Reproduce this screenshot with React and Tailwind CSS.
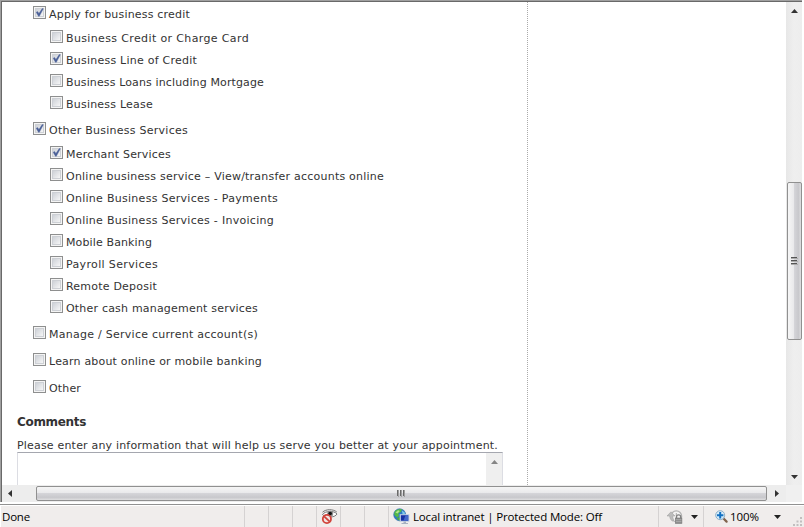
import React from 'react';

const items = [
  { text: 'Apply for business credit', checked: true, row: 'h-[24px]', width: 141 },
  { text: 'Business Credit or Charge Card', sub: true, row: 'h-[22px]', width: 183 },
  { text: 'Business Line of Credit', sub: true, checked: true, row: 'h-[22px]', width: 131 },
  { text: 'Business Loans including Mortgage', sub: true, row: 'h-[22px]', width: 198 },
  { text: 'Business Lease', sub: true, row: 'h-[26px]', width: 87 },
  { text: 'Other Business Services', checked: true, row: 'h-[24px]', width: 139 },
  { text: 'Merchant Services', sub: true, checked: true, row: 'h-[22px]', width: 105 },
  { text: 'Online business service – View/transfer accounts online', sub: true, row: 'h-[22px]', width: 318 },
  { text: 'Online Business Services - Payments', sub: true, row: 'h-[22px]', width: 212 },
  { text: 'Online Business Services - Invoicing', sub: true, row: 'h-[22px]', width: 208 },
  { text: 'Mobile Banking', sub: true, row: 'h-[22px]', width: 86 },
  { text: 'Payroll Services', sub: true, row: 'h-[22px]', width: 92 },
  { text: 'Remote Deposit', sub: true, row: 'h-[22px]', width: 91 },
  { text: 'Other cash management services', sub: true, row: 'h-[26px]', width: 192 },
  { text: 'Manage / Service current account(s)', row: 'h-[27px]', width: 209 },
  { text: 'Learn about online or mobile banking', row: 'h-[27px]', width: 213 },
  { text: 'Other', row: 'h-[34px]', width: 32 },
];

// Spreads a line's letters so that it fills the given width.
function Fit({ width, className = '', children }) {
  const ref = React.useRef(null);
  React.useLayoutEffect(() => {
    const el = ref.current;
    el.style.letterSpacing = '0px';
    const natural = el.getBoundingClientRect().width;
    el.style.letterSpacing = `${(width - natural) / el.textContent.length}px`;
  }, [width]);
  return (
    <span ref={ref} className={`inline-block whitespace-pre ${className}`}>
      {children}
    </span>
  );
}

function Checkbox({ checked }) {
  return (
    <svg className="h-[13px] w-[13px] shrink-0" viewBox="0 0 13 13">
      <defs>
        <linearGradient id="box" x1="0" y1="0" x2="1" y2="1">
          <stop offset="0" stopColor="#cbcfd5" />
          <stop offset="1" stopColor="#f8f8f8" />
        </linearGradient>
      </defs>
      <rect x=".5" y=".5" width="12" height="12" fill="#f4f4f4" stroke="#8e8f8f" />
      <rect x="2.5" y="2.5" width="8" height="8" fill="url(#box)" stroke="#cdd0d5" />
      {checked && <path d="M3.2 6.2 4.7 5.6 5.9 7.6 9.2 2.6 10.3 2.7 6.3 10.3 5.5 10.3Z" fill="#4a5f97" stroke="#4a5f97" strokeWidth=".4" />}
    </svg>
  );
}

function Arrow({ d, fill = '#333', w = 7, h = 4 }) {
  return (
    <svg width={w} height={h} viewBox={`0 0 ${w} ${h}`} className="shrink-0">
      <path d={d} fill={fill} />
    </svg>
  );
}

function BlockedEye() {
  return (
    <svg width="17" height="17" viewBox="0 0 17 17">
      <path d="M1.5 6.5C4 2.8 13 2.3 16 6C14 9.8 5 10 1.5 6.5Z" fill="#fff" stroke="#666" strokeWidth=".9" />
      <path d="M1.5 4.2C5 .9 12 .9 15.8 4" fill="none" stroke="#666" strokeWidth=".9" />
      <circle cx="9.2" cy="5.8" r="3" fill="#8a8a8a" />
      <circle cx="9.2" cy="5.5" r="1.8" fill="#111" />
      <circle cx="5.9" cy="11" r="4.1" fill="#f3e3e1" stroke="#d1433b" strokeWidth="1.8" />
      <path d="M3.1 8.4 8.7 13.6" stroke="#d1433b" strokeWidth="1.8" />
    </svg>
  );
}

function Globe() {
  return (
    <svg width="17" height="17" viewBox="0 0 17 17">
      <circle cx="6.7" cy="6.8" r="6" fill="#2d79c7" stroke="#2a68ad" strokeWidth=".6" />
      <path d="M1.5 4C3.5 .8 8 .6 9 1.5L8 4 5.5 5.3 6 8 4 9.5 1.2 7Z" fill="#54b948" />
      <path d="M2.5 4.5 5 2.2 6.8 3 4.5 5.5Z" fill="#b4e58d" />
      <path d="M3.5 10 7 9 7 12.6 5 12Z" fill="#4caa43" />
      <path d="M9 2.5 12 4.8 11.5 6.5 9.5 6Z" fill="#80cbed" />
      <rect x="7" y="6.5" width="9" height="7" fill="#dde6f1" stroke="#b8c8dc" strokeWidth=".6" />
      <rect x="7.8" y="7.2" width="7.5" height="5.6" fill="#1630a5" />
      <path d="M12.6 7.2H15.3V12.8H10.4Z" fill="#4468ca" />
      <path d="M10.5 13.5H13V15H15V16H8.5V15H10.5Z" fill="#a8b2c1" />
    </svg>
  );
}

function ProtectedLock() {
  return (
    <svg width="17" height="16" viewBox="0 0 17 16">
      <circle cx="9.3" cy="7.3" r="5.4" fill="#f4f3f3" stroke="#b3b3b3" strokeWidth="1.2" />
      <path d="M9.3 4V7.3" stroke="#aaa" strokeWidth="1" />
      <path d="M0 7 4 2.8 8 7H5.8C5.8 9 6.3 10 7 11L5.4 12.2C3.8 10.8 2.8 9.3 2.6 7Z" fill="#bcbcbc" stroke="#9c9c9c" strokeWidth=".5" />
      <path d="M9.5 9.2V8A2.1 2.1 0 0 1 13.7 8V9.2" fill="none" stroke="#808080" strokeWidth="1.3" />
      <rect x="8.3" y="9" width="6.6" height="5.4" fill="#8c8c8c" stroke="#777" strokeWidth=".6" />
      <path d="M8.8 10.7H14.4M8.8 12.6H14.4" stroke="#b9b9b9" strokeWidth=".7" />
    </svg>
  );
}

function Magnifier() {
  return (
    <svg width="13" height="13" viewBox="0 0 13 13">
      <path d="M8 8 11.6 11.6" stroke="#81634d" strokeWidth="2.2" strokeLinecap="round" />
      <circle cx="5.2" cy="5.2" r="4.5" fill="#d6ecfa" stroke="#8cadc5" strokeWidth="1" />
      <path d="M5.2 2V8.4M2 5.2H8.4" stroke="#1270c2" strokeWidth="2" />
    </svg>
  );
}

function HGrip() {
  return (
    <svg width="9" height="7" viewBox="0 0 9 7" shapeRendering="crispEdges">
      <path d="M.5 0V6M3.5 0V6M6.5 0V6" stroke="#6a6a6a" />
      <path d="M1.5 0V7M4.5 0V7M7.5 0V7" stroke="#a0a0a0" />
    </svg>
  );
}

function VGrip() {
  return (
    <svg width="7" height="9" viewBox="0 0 7 9" shapeRendering="crispEdges">
      <path d="M0 .5H6M0 3.5H6M0 6.5H6" stroke="#555" />
      <path d="M0 1.5H7M0 4.5H7M0 7.5H7" stroke="#aaa" />
    </svg>
  );
}

const Cell = ({ className, children }) => (
  <div className={`flex h-full shrink-0 items-center border-r border-[#d5d2d2] ${className}`}>{children}</div>
);

export default function App() {
  return (
    <div className="flex h-[527px] w-[804px] flex-col overflow-hidden bg-white font-['DejaVu_Sans','Liberation_Sans',sans-serif] text-[11px] text-[#333]">
      <div className="flex h-[502px] w-[802px] shrink-0 flex-col border-t border-l border-[#a0a0a0]">
        <div className="flex min-h-0 flex-1 flex-col border-t border-l border-[#696969]">
          <div className="flex h-[483px] shrink-0">
            <div className="flex w-[784px] shrink-0">
              <main className="h-[483px] w-[526px] shrink-0 overflow-hidden border-r border-dotted border-[#aaa] pt-1">
                {items.map((item) => (
                  <div key={item.text} className={`flex items-start gap-[3px] ${item.row} ${item.sub ? 'pl-[48px]' : 'pl-[31px]'}`}>
                    <Checkbox checked={item.checked} />
                    <Fit width={item.width} className="mt-[2px] leading-[14px]">{item.text}</Fit>
                  </div>
                ))}
                <div className="pl-[15px]">
                  <h2 className="h-[24px] text-[12px] font-bold leading-[16px]"><Fit width={69}>Comments</Fit></h2>
                  <p className="h-[14px] pt-px leading-[14px]"><Fit width={481}>Please enter any information that will help us serve you better at your appointment.</Fit></p>
                  <div className="flex h-[60px] w-[486px] justify-end border border-[#dcdde3] border-t-[#a5a7af]">
                    <div className="flex w-[16px] items-start justify-center bg-[#efefef] pt-[7px]">
                      <Arrow d="M0 4 3.5 0 7 4Z" fill="#858585" />
                    </div>
                  </div>
                </div>
              </main>
            </div>
            <div className="flex w-[16px] shrink-0 flex-col items-center bg-gradient-to-r from-[#e7e7e7] via-[#efefef] to-[#ededed]">
              <div className="flex h-[180px] shrink-0 items-start pt-[7px]"><Arrow d="M0 4 3.5 0 7 4Z" /></div>
              <div className="flex h-[158px] w-[15px] shrink-0 items-center justify-center rounded-[2px] border border-[#909090] bg-[linear-gradient(to_right,#f6f6f6_0%,#e9e9eb_45%,#d4d4d8_50%,#c8c8cc_80%,#dedee0_100%)]"><VGrip /></div>
              <div className="flex flex-1 items-end pb-[6px]"><Arrow d="M0 0H7L3.5 4Z" /></div>
            </div>
          </div>
          <div className="flex h-[17px] shrink-0 items-center bg-[#ededed]">
            <div className="flex w-[34px] shrink-0 pl-[6px]"><Arrow d="M4 0V7L0 3.5Z" w={4} h={7} /></div>
            <div className="flex h-[15px] w-[731px] shrink-0 items-center justify-center rounded-[2px] border border-[#909090] bg-[linear-gradient(to_bottom,#f5f5f5_0%,#e9e9eb_45%,#d4d4d8_50%,#c8c8cc_80%,#dedee0_100%)]"><HGrip /></div>
            <div className="flex w-[19px] shrink-0 justify-center"><Arrow d="M0 0V7L4 3.5Z" w={4} h={7} /></div>
            <div className="h-full flex-1 bg-[#f0f0f0]" />
          </div>
        </div>
      </div>
      <div className="mt-[2px] h-px shrink-0 bg-[#919191]" />
      <footer className="mt-px ml-px flex h-[21px] shrink-0 items-center bg-[#f0edec] font-['Open_Sans','Noto_Sans',sans-serif] text-[11.5px] leading-[20px] text-black">
        <Cell className="w-[244px] pl-px"><Fit width={28}>Done</Fit></Cell>
        <Cell className="w-[24px]" />
        <Cell className="w-[24px]" />
        <Cell className="w-[24px]" />
        <Cell className="w-[24px] pl-[4px]"><BlockedEye /></Cell>
        <Cell className="w-[24px]" />
        <Cell className="w-[24px]" />
        <Cell className="w-[270px] gap-[3px] pl-[4px]">
          <Globe />
          <Fit width={189}>Local intranet | Protected Mode: Off</Fit>
        </Cell>
        <Cell className="w-[45px] gap-[7px] pl-[8px]">
          <ProtectedLock />
          <Arrow d="M0 0H7L3.5 4Z" fill="#222" />
        </Cell>
        <div className="flex flex-1 items-center pl-[11px]">
          <Magnifier />
          <Fit width={29} className="ml-[2px]">100%</Fit>
          <div className="ml-[15px]"><Arrow d="M0 0H7L3.5 4Z" fill="#222" /></div>
          <svg className="mt-[9px] ml-auto mr-[2px]" width="9" height="9" viewBox="0 0 9 9" fill="#c2bfbf">
            <path d="M7 0H9V2H7ZM7 3.5H9V5.5H7ZM3.5 3.5H5.5V5.5H3.5ZM7 7H9V9H7ZM3.5 7H5.5V9H3.5ZM0 7H2V9H0Z" />
          </svg>
        </div>
      </footer>
    </div>
  );
}
